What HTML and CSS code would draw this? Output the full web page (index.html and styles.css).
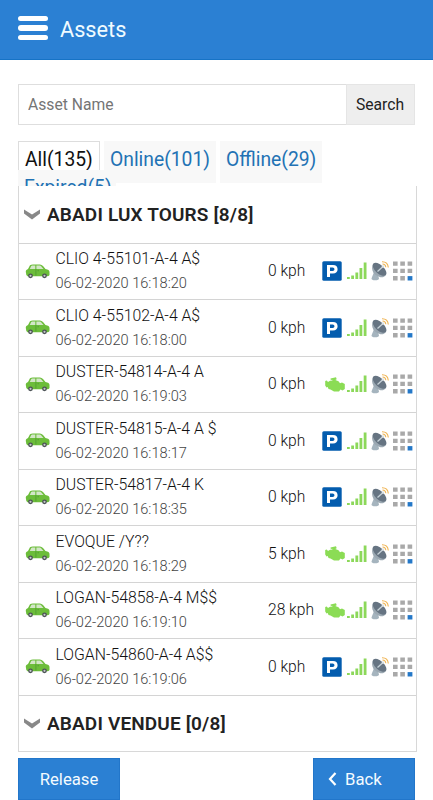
FILE: index.html
```
<!DOCTYPE html>
<html lang="en">
<head>
	<meta charset="utf-8">
	<meta name="viewport" content="width=device-width, initial-scale=1">
	<title>Assets</title>
	<link rel="stylesheet" href="styles.css">
</head>
<body>
	<svg class="sprite" aria-hidden="true">
		<symbol id="car" viewBox="0 0 25 15">
			<path d="M1 9Q0 6 3 5L5 1.2Q6 .5 8 .5H15Q16.500 .5 18 2L20.500 5Q24.500 5.500 24.500 8V11Q24 12.300 22 12.300H2.500Q1 12 1 9Z" fill="#6cbd3a"/>
			<path d="M4.800 4.900L6.200 2Q6.500 1.600 7.200 1.600H10.300V4.900ZM11.400 1.600H14.800Q15.600 1.600 16.400 2.500L18.500 4.900H11.400Z" fill="#d3e6c8"/>
			<path d="M10.900 5V11.500M12.500 6.700H14" stroke="#438e2b" stroke-width=".6"/>
			<circle cx="5.500" cy="11.800" r="2.400" fill="#4b5155"/>
			<circle cx="19.500" cy="11.800" r="2.400" fill="#4b5155"/>
			<circle cx="5.500" cy="11.800" r="1.100" fill="#c3c9c8"/>
			<circle cx="19.500" cy="11.800" r="1.100" fill="#c3c9c8"/>
		</symbol>
		<symbol id="parking" viewBox="0 0 20 20">
			<rect x=".3" y=".3" width="19.400" height="19.400" rx="1.500" fill="#035cae"/>
			<path fill-rule="evenodd" d="M5 4H11C14 4 15.600 5.600 15.600 8.200S14 12.400 11 12.400H8V16H5ZM8 6.500V9.900H10.600Q12.500 9.900 12.500 8.200T10.600 6.500Z" fill="#fff"/>
		</symbol>
		<symbol id="engine" viewBox="0 0 20 15">
			<path d="M5.500 1.500L11 .3L11.700 2.200L10.300 3L13.500 4.200L15 6.300L17 5.500L19.800 7V12L17.500 13.500L15.500 12.500L14 14.500H9L5.500 12.500L3.500 12L2.800 10L1.500 10.500L.2 8.500V4L1.800 3.500L3 5L5 3.800L7.500 3.500L7.200 2.700L5.800 3Z" fill="#8bdc55"/>
		</symbol>
		<symbol id="signal" viewBox="0 0 20 18">
			<path d="M0 15h2.800v2H0ZM4.200 13.500H7v3.500H4.200ZM8.400 10.500h2.800V17H8.400ZM12.500 6h2.800v11h-2.800ZM16.700.5h2.800V17h-2.800Z" fill="#8cd85a"/>
		</symbol>
		<symbol id="dish" viewBox="0 0 18 20">
			<path d="M3 11L.5 17.500Q.5 19.300 4 19.300Q8 19.300 8 17.500L7 14Z" fill="#a5b4be"/>
			<path d="M2.300 2.500C-.3 7 1.500 12 5.500 14.500S12.500 17 15 14Z" fill="#9ba8b2"/>
			<ellipse cx="8.600" cy="8.300" rx="8.400" ry="4.300" transform="rotate(43 8.600 8.300)" fill="#667482"/>
			<path d="M6.500 10.500L12 5.500" stroke="#c7d2d8" stroke-width="1.300"/>
			<circle cx="12" cy="5.500" r="1.200" fill="#dbe2e5"/>
			<path d="M11.500 3Q14.500 3 14.800 6.200M11 .7Q16.800 .6 17.300 6.500" fill="none" stroke="#efb351" stroke-width="1.100"/>
		</symbol>
		<symbol id="grid" viewBox="0 0 20 20">
			<path d="M0 .5h4.600v4.300H0ZM7.300.5h4.600v4.300H7.300ZM14.600.5h4.600v4.300h-4.600ZM0 7.800h4.600v4.300H0ZM7.300 7.800h4.600v4.300H7.300ZM14.600 7.800h4.600v4.300h-4.600ZM0 15.100h4.600v4.400H0ZM7.300 15.100h4.600v4.400H7.300Z" fill="#a9a9a9"/>
			<path d="M14.600 15.100h4.800v4.400h-4.800Z" fill="#2478c8"/>
		</symbol>
		<symbol id="chevron" viewBox="0 0 16 11">
			<path d="M0 .5L8 5.500L16 .5V4.500L8 10.500L0 4.500Z" fill="#888"/>
		</symbol>
	</svg>

	<header class="topbar">
		<div class="menu"><span></span><span></span><span></span></div>
		<h1>Assets</h1>
	</header>

	<div class="search">
		<input type="text" placeholder="Asset Name">
		<button>Search</button>
	</div>

	<nav class="tabs">
		<a class="tab active"><span>All(135)</span></a>
		<a class="tab online"><span>Online(101)</span></a>
		<a class="tab offline"><span>Offline(29)</span></a>
		<a class="tab expired"><span>Expired(5)</span></a>
	</nav>

	<main class="list">
		<h2 class="group"><svg><use href="#chevron"/></svg><span>ABADI LUX TOURS [8/8]</span></h2>
		<div class="asset">
			<svg class="car"><use href="#car"/></svg>
			<div class="info"><b>CLIO 4-55101-A-4 A$</b><time>06-02-2020 16:18:20</time></div>
			<div class="speed"><span>0 kph</span></div>
			<svg class="state"><use href="#parking"/></svg>
			<svg class="signal"><use href="#signal"/></svg>
			<svg class="dish"><use href="#dish"/></svg>
			<svg class="grid"><use href="#grid"/></svg>
		</div>
		<div class="asset">
			<svg class="car"><use href="#car"/></svg>
			<div class="info"><b>CLIO 4-55102-A-4 A$</b><time>06-02-2020 16:18:00</time></div>
			<div class="speed"><span>0 kph</span></div>
			<svg class="state"><use href="#parking"/></svg>
			<svg class="signal"><use href="#signal"/></svg>
			<svg class="dish"><use href="#dish"/></svg>
			<svg class="grid"><use href="#grid"/></svg>
		</div>
		<div class="asset">
			<svg class="car"><use href="#car"/></svg>
			<div class="info"><b>DUSTER-54814-A-4 A</b><time>06-02-2020 16:19:03</time></div>
			<div class="speed"><span>0 kph</span></div>
			<svg class="state engine"><use href="#engine"/></svg>
			<svg class="signal"><use href="#signal"/></svg>
			<svg class="dish"><use href="#dish"/></svg>
			<svg class="grid"><use href="#grid"/></svg>
		</div>
		<div class="asset">
			<svg class="car"><use href="#car"/></svg>
			<div class="info"><b>DUSTER-54815-A-4 A $</b><time>06-02-2020 16:18:17</time></div>
			<div class="speed"><span>0 kph</span></div>
			<svg class="state"><use href="#parking"/></svg>
			<svg class="signal"><use href="#signal"/></svg>
			<svg class="dish"><use href="#dish"/></svg>
			<svg class="grid"><use href="#grid"/></svg>
		</div>
		<div class="asset">
			<svg class="car"><use href="#car"/></svg>
			<div class="info"><b>DUSTER-54817-A-4 K</b><time>06-02-2020 16:18:35</time></div>
			<div class="speed"><span>0 kph</span></div>
			<svg class="state"><use href="#parking"/></svg>
			<svg class="signal"><use href="#signal"/></svg>
			<svg class="dish"><use href="#dish"/></svg>
			<svg class="grid"><use href="#grid"/></svg>
		</div>
		<div class="asset">
			<svg class="car"><use href="#car"/></svg>
			<div class="info"><b>EVOQUE /Y??</b><time>06-02-2020 16:18:29</time></div>
			<div class="speed"><span>5 kph</span></div>
			<svg class="state engine"><use href="#engine"/></svg>
			<svg class="signal"><use href="#signal"/></svg>
			<svg class="dish"><use href="#dish"/></svg>
			<svg class="grid"><use href="#grid"/></svg>
		</div>
		<div class="asset">
			<svg class="car"><use href="#car"/></svg>
			<div class="info"><b>LOGAN-54858-A-4 M$$</b><time>06-02-2020 16:19:10</time></div>
			<div class="speed"><span>28 kph</span></div>
			<svg class="state engine"><use href="#engine"/></svg>
			<svg class="signal"><use href="#signal"/></svg>
			<svg class="dish"><use href="#dish"/></svg>
			<svg class="grid"><use href="#grid"/></svg>
		</div>
		<div class="asset">
			<svg class="car"><use href="#car"/></svg>
			<div class="info"><b>LOGAN-54860-A-4 A$$</b><time>06-02-2020 16:19:06</time></div>
			<div class="speed"><span>0 kph</span></div>
			<svg class="state"><use href="#parking"/></svg>
			<svg class="signal"><use href="#signal"/></svg>
			<svg class="dish"><use href="#dish"/></svg>
			<svg class="grid"><use href="#grid"/></svg>
		</div>
		<h2 class="group"><svg><use href="#chevron"/></svg><span>ABADI VENDUE [0/8]</span></h2>
	</main>

	<footer class="actions">
		<button>Release</button>
		<button class="back"><svg viewBox="0 0 9 14"><path d="M7.500 1L2 7L7.500 13" fill="none" stroke="#fff" stroke-width="2.200"/></svg>Back</button>
	</footer>
</body>
</html>
```
FILE: styles.css
```
* { box-sizing: border-box; }
body {
	margin: 0;
	height: 800px;
	overflow: hidden;
	background: #fff;
	color: #222;
	font-family: Roboto, "Liberation Sans", sans-serif;
}
.sprite { display: none; }
svg { display: block; flex: none; }
button, input { font-family: inherit; border-radius: 0; }

.topbar {
	display: flex;
	align-items: center;
	height: 60px;
	padding-left: 18px;
	background: #2b80d3;
	border-bottom: 1px solid #1673c6;
}
.menu {
	display: grid;
	gap: 4px;
	width: 30px;
	margin: 0 12px 3px 0;
}
.menu span { height: 5.300px; border-radius: 3px; background: #fff; }
.topbar h1 {
	margin: 0;
	color: #f0fbff;
	font-size: 21.700px;
	font-weight: 400;
}

.search {
	display: flex;
	height: 41px;
	margin: 24px 18px 0;
}
.search input {
	flex: 1;
	min-width: 0;
	padding: 0 9px;
	border: 1px solid #dedede;
	border-right: 0;
	font-size: 15.700px;
}
.search input::placeholder { color: #757575; }
.search button {
	width: 69px;
	padding: 0 1px 0 0;
	border: 1px solid #e5e5e5;
	background: #eee;
	color: #222;
	font-size: 15.700px;
}

/* the last tab wraps and is cut off by the list */
.tabs {
	display: flex;
	flex-wrap: wrap;
	align-content: flex-start;
	height: 45px;
	margin: 16px 18px 0;
	overflow: hidden;
}
.tab {
	height: 42px;
	padding: 7px 6px 0;
	background: #f8f8f8;
	color: #2272b4;
	font-size: 19.300px;
	line-height: 24px;
	white-space: nowrap;
}
.tab.active {
	width: 82px;
	padding-top: 6px;
	border: 1px solid #ddd;
	border-bottom: 0;
	background: #fff;
	color: #111;
}
.tab.online { width: 112px; margin-left: 4px; }
.tab.offline { width: 102px; margin-left: 4px; }
.tab.expired { width: 98px; margin-top: -13px; padding-top: 6px; }

.list {
	width: 399px;
	height: 566px;
	margin-left: 18px;
	border: 1px solid #d8d8d8;
	border-top: 0;
}
.group {
	display: flex;
	align-items: center;
	height: 56.500px;
	margin: 0;
	padding: 1px 0 0 5px;
	font-size: 19px;
	font-weight: 600;
	letter-spacing: .15px;
}
.group svg { width: 16px; height: 11px; margin-right: 7px; }
.asset {
	display: flex;
	align-items: center;
	height: 56.500px;
	padding-left: 6px;
	border-top: 1px solid #d4d4d4;
}
.asset + .group { border-top: 1px solid #d4d4d4; }
.car { width: 25px; height: 15px; }
.info { width: 218px; flex: none; padding: 1px 0 0 5.500px; white-space: nowrap; }
.info b {
	display: block;
	color: #111;
	font-size: 15.800px;
	font-weight: 300;
	line-height: 24px;
}
.info time {
	display: block;
	color: #444;
	font-size: 14.600px;
	font-weight: 300;
	line-height: 25px;
}
.speed { width: 54px; flex: none; color: #111; font-size: 15.600px; font-weight: 300; }
.state { width: 20px; height: 20px; }
.state.engine { height: 15px; margin: 0 -3px 0 3px; }
.signal { width: 20px; height: 18px; margin-left: 5px; }
.dish { width: 18px; height: 20px; margin-left: 4px; }
.grid { width: 20px; height: 20px; margin-left: 4px; }

.actions {
	display: flex;
	justify-content: space-between;
	margin: 6px 18px 0;
}
.actions button {
	display: flex;
	align-items: center;
	justify-content: center;
	width: 102px;
	height: 42px;
	padding: 0;
	border: 1px solid #2276ca;
	background: #2b80d3;
	color: #f4fbff;
	font-size: 16.700px;
}
.actions .back { justify-content: flex-start; padding-left: 14px; }
.back svg { width: 9px; height: 14px; margin-right: 8px; }
```
